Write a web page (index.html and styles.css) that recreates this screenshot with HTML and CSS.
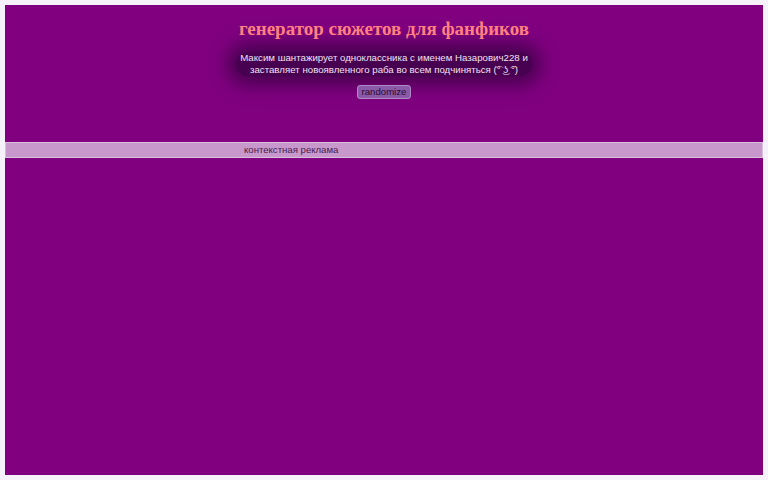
FILE: index.html
```html
<!DOCTYPE html>
<html lang="ru">
<head>
    <meta charset="UTF-8">
    <title>генератор сюжетов для фанфиков</title>
    <link rel="stylesheet" href="styles.css">
</head>
<body>
    <div id="page">
        <div class="column">
            <h1>генератор сюжетов для фанфиков</h1>
            <div class="plot">Максим шантажирует одноклассника с именем Назарович228 и заставляет новоявленного раба во всем подчиняться (͡° ͜ʖ ͡°)</div>
            <button class="randomize">randomize</button>
        </div>
        <div class="ad-bar">
            <div class="column">контекстная реклама</div>
        </div>
    </div>
</body>
</html>
```

FILE: styles.css
```css
body {
    margin: 0;
    padding: 5px;
    background-color: #f6f2fa;
    font-family: "Liberation Sans", Arial, sans-serif;
}

#page {
    background-color: #800080;
    height: 470px;
    padding-top: 15px;
    box-sizing: border-box;
}

.column {
    width: 280px;
    margin: 0 auto;
    text-align: center;
}

h1 {
    margin: 0 -20px;
    font-family: "Liberation Serif", "Times New Roman", serif;
    font-size: 19px;
    font-weight: bold;
    color: #ff8080;
    white-space: nowrap;
    line-height: 18px;
}

.plot {
    margin: 14px -8px 0;
    color: #f0e0f0;
    font-size: 9.7px;
    line-height: 12px;
    background-color: #480050;
    box-shadow: 0 0 18px 9px #480050;
    border-radius: 12px;
}

.randomize {
    margin-top: 9px;
    font-family: "Liberation Sans", Arial, sans-serif;
    font-size: 9.6px;
    color: #2a0a30;
    background-color: #8a5aa8;
    border: 1px solid #b08ac8;
    border-radius: 3px;
    padding: 1px 4px;
    line-height: 10px;
}

.ad-bar {
    margin-top: 43px;
    background-color: #c898cc;
    border: 1px solid #d8c0dc;
    height: 14px;
    font-size: 9.6px;
    line-height: 14px;
    color: #4a2050;
}

.ad-bar .column {
    text-align: left;
}
```
